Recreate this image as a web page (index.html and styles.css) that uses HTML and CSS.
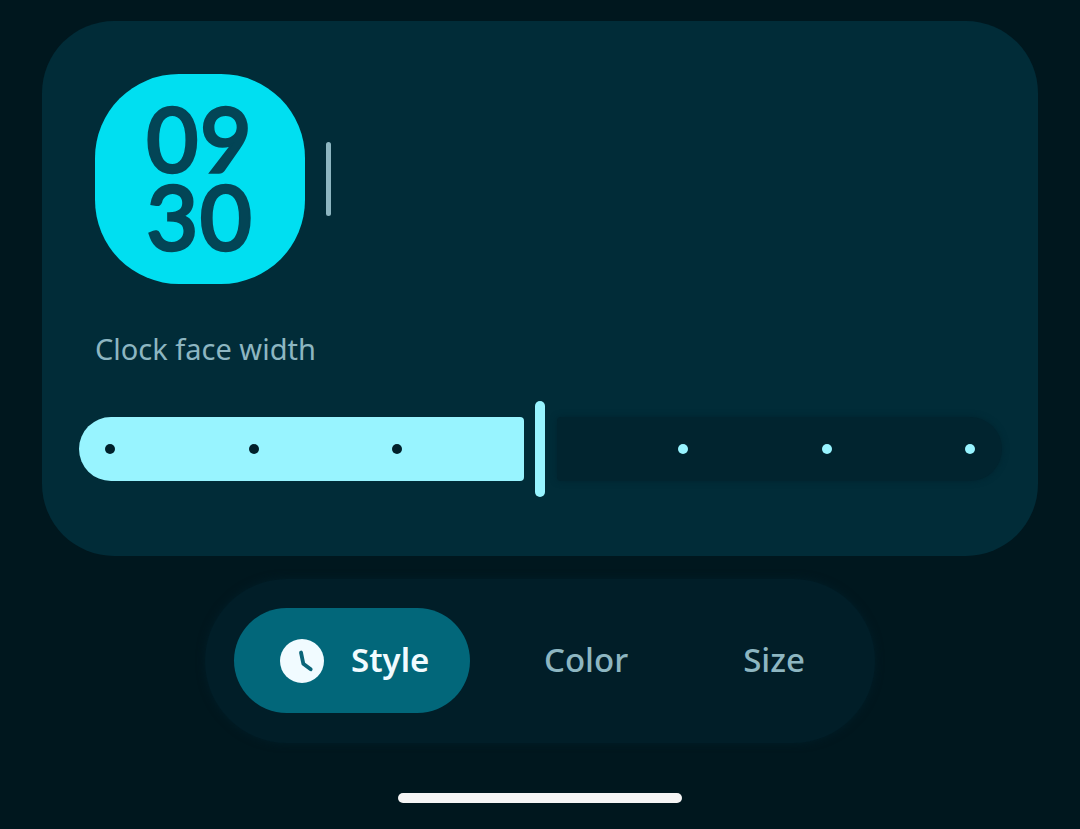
FILE: index.html
```html
<!DOCTYPE html>
<html lang="en">
<head>
    <meta charset="UTF-8">
    <meta name="viewport" content="width=device-width, initial-scale=1.0">
    <title>Clock style</title>
    <link rel="stylesheet" href="styles.css">
</head>
<body>
    <div class="card">
        <div class="preview">
            <div class="clock-tile">
                <span>09</span>
                <span>30</span>
            </div>
            <div class="cursor"></div>
        </div>

        <p class="label">Clock face width</p>

        <div class="slider">
            <div class="track track-active">
                <span class="dot"></span>
                <span class="dot"></span>
                <span class="dot"></span>
            </div>
            <div class="handle"></div>
            <div class="track track-rest">
                <span class="dot"></span>
                <span class="dot"></span>
                <span class="dot"></span>
            </div>
        </div>
    </div>

    <div class="tabs">
        <div class="tab tab-active">
            <svg class="tab-icon" width="44" height="44" viewBox="0 0 44 44">
                <circle cx="22" cy="22" r="22" fill="#f1fbff"/>
                <path d="M21 13.5 L23.3 24.7 L30.7 30.3" fill="none" stroke="#0a6478" stroke-width="3.8" stroke-linecap="round" stroke-linejoin="round"/>
            </svg>
            <span class="tab-text">Style</span>
        </div>
        <div class="tab">Color</div>
        <div class="tab">Size</div>
    </div>

    <div class="home-bar"></div>
</body>
</html>
```

FILE: styles.css
```css
body {
    margin: 0;
    height: 829px;
    overflow: hidden;
    display: flex;
    flex-direction: column;
    align-items: center;
    background-color: #00171e;
    font-family: "Noto Sans", "Lato", sans-serif;
}

/* Top card */
.card {
    box-sizing: border-box;
    width: 996px;
    height: 535px;
    margin-top: 21px;
    padding: 53px 36px 0 37px;
    background-color: #012c38;
    border-radius: 72px;
}

.preview {
    display: flex;
    align-items: center;
    gap: 21px;
    margin-left: 16px;
}

.clock-tile {
    box-sizing: border-box;
    width: 210px;
    height: 210px;
    padding-bottom: 4px;
    border-radius: 84px;
    background-color: #00dff1;
    color: #034556;
    display: flex;
    flex-direction: column;
    align-items: center;
    justify-content: center;
    font-family: "Lato", sans-serif;
    font-size: 89px;
    font-weight: 400;
    line-height: 78px;
    letter-spacing: 2px;
    -webkit-text-stroke: 3.5px #034556;
    paint-order: stroke fill;
}

.cursor {
    width: 5px;
    height: 74px;
    border-radius: 3px;
    background-color: #8db6c1;
}

.label {
    margin: 48px 0 0 16px;
    font-size: 29px;
    line-height: 34px;
    color: #8db6c1;
}

/* Width slider */
.slider {
    display: flex;
    align-items: center;
    height: 96px;
    margin-top: 35px;
}

.track {
    height: 64px;
    display: flex;
    align-items: center;
    gap: 133.5px;
}

.track-active {
    box-sizing: border-box;
    width: 445px;
    padding-left: 26px;
    background-color: #98f4ff;
    border-radius: 32px 4px 4px 32px;
    color: #00202b;
}

.track-rest {
    box-sizing: border-box;
    width: 445px;
    margin-left: 12px;
    padding-right: 27px;
    justify-content: flex-end;
    background-color: #01242f;
    box-shadow: 0 0 6px #01242f;
    border-radius: 4px 32px 32px 4px;
    color: #98f4ff;
}

.dot {
    width: 10px;
    height: 10px;
    border-radius: 50%;
    background-color: currentColor;
}

.handle {
    width: 10px;
    height: 96px;
    margin-left: 11px;
    border-radius: 5px;
    background-color: #98f4ff;
}

/* Bottom tabs */
.tabs {
    box-sizing: border-box;
    width: 670px;
    height: 164px;
    margin-top: 23px;
    padding: 29px;
    display: flex;
    align-items: flex-start;
    gap: 33px;
    background-color: #011e28;
    box-shadow: 0 0 8px #011e28;
    border-radius: 82px;
}

.tab {
    padding: 0 41px;
    font-size: 33px;
    font-weight: 500;
    line-height: 103px;
    color: #8db6c1;
}

.tab-active {
    box-sizing: border-box;
    width: 236px;
    height: 105px;
    padding: 0 0 0 46px;
    display: flex;
    align-items: center;
    gap: 27px;
    background-color: #02677a;
    border-radius: 53px;
    color: #f1fbff;
    font-weight: 600;
}

.tab-text {
    margin-bottom: 2px;
}

.home-bar {
    width: 284px;
    height: 10px;
    margin-top: 50px;
    border-radius: 5px;
    background-color: #f5f5f5;
}
```
